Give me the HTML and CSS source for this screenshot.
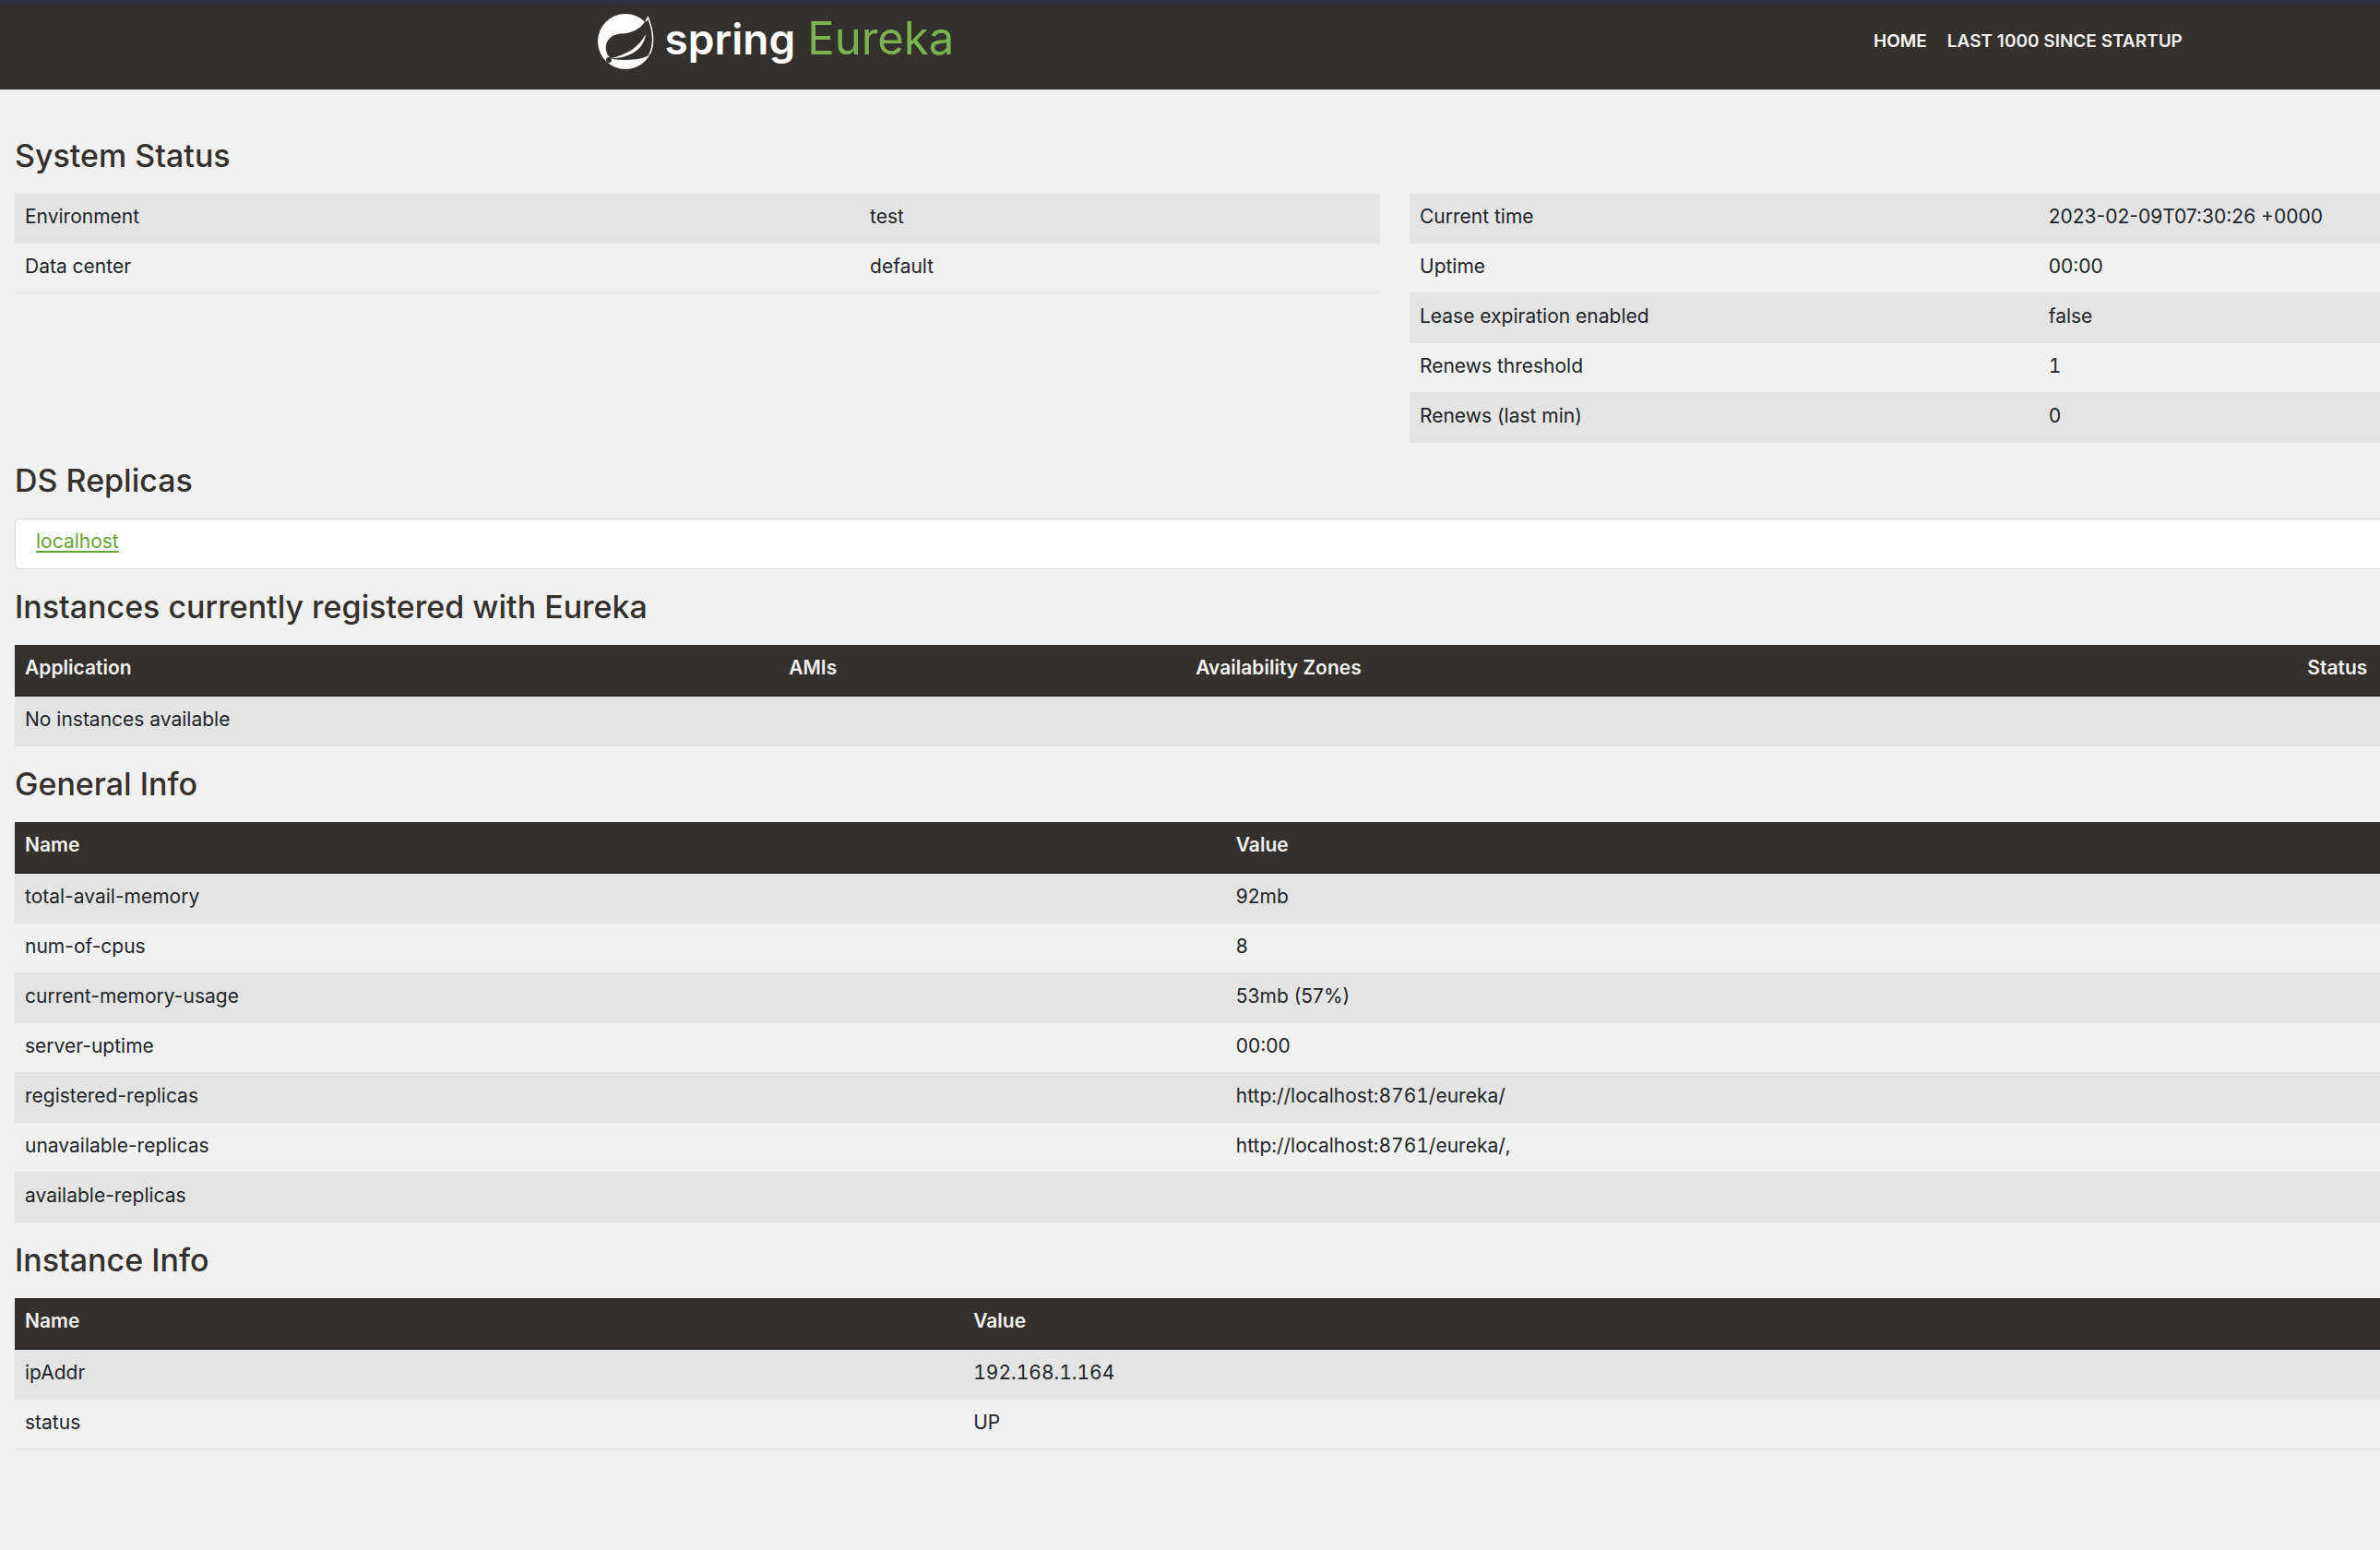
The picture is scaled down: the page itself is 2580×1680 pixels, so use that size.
FILE: index.html
```html
<!DOCTYPE html>
<html lang="en">
<head>
  <meta charset="utf-8">
  <title>Eureka</title>
  <meta name="viewport" content="width=device-width, initial-scale=1">
  <link rel="stylesheet" href="styles.css">
</head>
<body>
  <header class="navbar">
    <a class="brand" href="#">
      <svg class="brand-icon" viewBox="0 0 62 60" aria-hidden="true">
        <circle cx="30" cy="30" r="30" fill="#fff"/>
        <path fill="#34302d" d="M52 7l3-3C61 21 61 36 56 44c-7 6-24 7-41 5l-4-4C5 33 12 23 24 21.500 38 21 46 17 52 7z"/>
        <path fill="none" stroke="#fff" stroke-width="1.500" d="M52 8l2.500-4C60 18 62 32 56 44"/>
        <path fill="#fff" d="M52 22C50 38 36 48 13 48.500 32 44 44 37 52 22z"/>
        <circle cx="12" cy="50" r="3" fill="#34302d"/>
      </svg>
      <span class="brand-name">spring</span>
      <span class="brand-product">Eureka</span>
    </a>
    <nav class="menu">
      <a class="menu-link active" href="#">HOME</a>
      <a class="menu-link" href="#">LAST 1000 SINCE STARTUP</a>
    </nav>
  </header>

  <main class="content">
    <h1>System Status</h1>
    <div class="status">
      <table class="table">
        <colgroup><col class="col-environment"><col></colgroup>
        <tbody>
          <tr><td>Environment</td><td>test</td></tr>
          <tr><td>Data center</td><td>default</td></tr>
        </tbody>
      </table>
      <table class="table">
        <colgroup><col class="col-metric"><col></colgroup>
        <tbody>
          <tr><td>Current time</td><td>2023-02-09T07:30:26 +0000</td></tr>
          <tr><td>Uptime</td><td>00:00</td></tr>
          <tr><td>Lease expiration enabled</td><td>false</td></tr>
          <tr><td>Renews threshold</td><td class="numeric">1</td></tr>
          <tr><td>Renews (last min)</td><td class="numeric">0</td></tr>
        </tbody>
      </table>
    </div>

    <h1>DS Replicas</h1>
    <ul class="replicas">
      <li><a href="#">localhost</a></li>
    </ul>

    <h1>Instances currently registered with Eureka</h1>
    <table class="table">
      <colgroup><col class="col-application"><col class="col-amis"><col class="col-zones"><col></colgroup>
      <thead>
        <tr><th>Application</th><th>AMIs</th><th>Availability Zones</th><th>Status</th></tr>
      </thead>
      <tbody>
        <tr><td colspan="4">No instances available</td></tr>
      </tbody>
    </table>

    <h1>General Info</h1>
    <table class="table">
      <colgroup><col class="col-general"><col></colgroup>
      <thead>
        <tr><th>Name</th><th>Value</th></tr>
      </thead>
      <tbody>
        <tr><td>total-avail-memory</td><td>92mb</td></tr>
        <tr><td>num-of-cpus</td><td>8</td></tr>
        <tr><td>current-memory-usage</td><td>53mb (57%)</td></tr>
        <tr><td>server-uptime</td><td>00:00</td></tr>
        <tr><td>registered-replicas</td><td class="numeric">http://localhost:8761/eureka/</td></tr>
        <tr><td>unavailable-replicas</td><td class="numeric">http://localhost:8761/eureka/,</td></tr>
        <tr><td>available-replicas</td><td></td></tr>
      </tbody>
    </table>

    <h1>Instance Info</h1>
    <table class="table">
      <colgroup><col class="col-instance"><col></colgroup>
      <thead>
        <tr><th>Name</th><th>Value</th></tr>
      </thead>
      <tbody>
        <tr><td>ipAddr</td><td class="numeric">192.168.1.164</td></tr>
        <tr><td>status</td><td>UP</td></tr>
      </tbody>
    </table>
  </main>
</body>
</html>
```
FILE: styles.css
```css
* {
  box-sizing: border-box;
}

body {
  margin: 0;
  background: #f1f1f1;
  color: #212529;
  font: 21px/32px Inter, "Open Sans", sans-serif;
}

.navbar {
  display: flex;
  align-items: flex-start;
  justify-content: space-between;
  height: 97px;
  padding: 0 8.3% 0 25.1%;
  border-top: 4px solid #2f3344;
  background: #34302d;
}

.brand {
  display: flex;
  align-items: flex-start;
  margin-top: 11px;
  color: #fff;
  line-height: 54px;
  text-decoration: none;
}

.brand-icon {
  width: 62px;
  height: 60px;
  margin-right: 11px;
}

.brand-name {
  margin-right: 13px;
  font-size: 46px;
  font-weight: 600;
}

.brand-product {
  color: #7bb34f;
  font-size: 49px;
}

.menu {
  display: flex;
  gap: 22px;
  margin-top: 25px;
}

.menu-link {
  color: #f1f1f1;
  font-size: 19px;
  font-weight: 600;
  text-decoration: none;
}

.menu-link.active {
  color: #fff;
}

.content {
  padding: 31px 0 30px 16px;
}

h1 {
  margin: 0;
  padding: 22px 0;
  color: #34302d;
  font-size: 34px;
  font-weight: 500;
  line-height: 38px;
}

.status {
  display: grid;
  grid-template-columns: 1480fr 1052fr;
  align-items: start;
  gap: 32px;
}

.table {
  width: 100%;
  table-layout: fixed;
  border-spacing: 0;
}

.table th,
.table td {
  height: 54px;
  padding: 9px 11px 12px;
  border-bottom: 1px solid #dee2e6;
  text-align: left;
  vertical-align: top;
  white-space: nowrap;
}

.table th {
  height: 56px;
  border-bottom: 2px solid #212529;
  background: #34302d;
  color: #f1f1f1;
  font-weight: 600;
}

.table .numeric {
  font-variant-numeric: tabular-nums;
}

.table tbody tr:nth-child(odd) {
  background: #e4e4e4;
}

.col-environment {
  width: 61.9%;
}

.col-metric {
  width: 64.8%;
}

.col-application {
  width: 32.3%;
}

.col-amis {
  width: 17.2%;
}

.col-zones {
  width: 47%;
}

.col-general {
  width: 51.2%;
}

.col-instance {
  width: 40.1%;
}

.replicas {
  margin: 0;
  padding: 8px 22px 13px;
  border: 1px solid #dcdcdc;
  border-right: 0;
  border-radius: 5px 0 0 5px;
  background: #fff;
  list-style: none;
}

.replicas a {
  color: #66a336;
  text-decoration-thickness: 2px;
  text-underline-offset: 3px;
}
```
